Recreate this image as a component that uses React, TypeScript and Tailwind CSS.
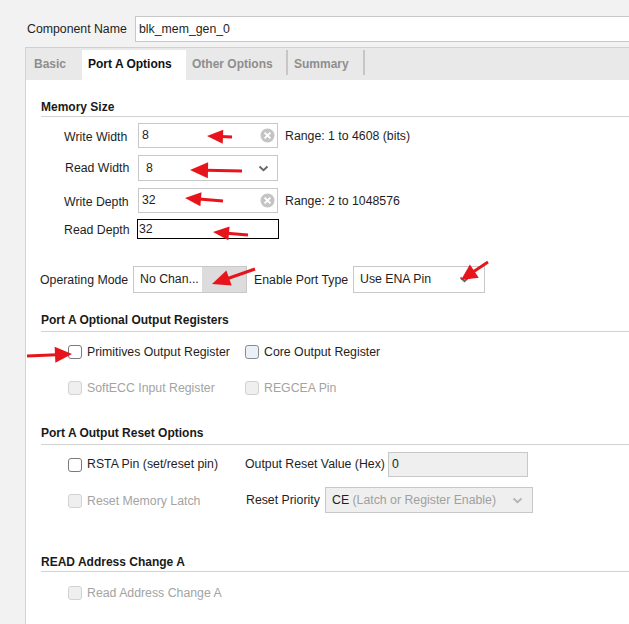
import React from 'react';

const RED = '#e8141c';

function Arrow({ x1, y1, x2, y2, head = 16, hw = 7, sw = 3 }: { x1: number; y1: number; x2: number; y2: number; head?: number; hw?: number; sw?: number }) {
  const dx = x2 - x1;
  const dy = y2 - y1;
  const len = Math.hypot(dx, dy);
  const ux = dx / len;
  const uy = dy / len;
  const px = -uy;
  const py = ux;
  const bx = x2 - ux * head;
  const by = y2 - uy * head;
  const pts = `${x2},${y2} ${bx + px * hw},${by + py * hw} ${bx - px * hw},${by - py * hw}`;
  return (
    <g>
      <line x1={x1} y1={y1} x2={bx + ux * 2} y2={by + uy * 2} stroke={RED} strokeWidth={sw} />
      <polygon points={pts} fill={RED} />
    </g>
  );
}

function Chevron({ color = '#666' }: { color?: string }) {
  return (
    <svg width="11" height="7" viewBox="0 0 11 7">
      <path d="M1.5 1.5 L5.5 5.2 L9.5 1.5" fill="none" stroke={color} strokeWidth="1.8" />
    </svg>
  );
}

function ClearIcon() {
  return (
    <svg width="15" height="15" viewBox="0 0 15 15">
      <circle cx="7.5" cy="7.5" r="7" fill="#c4c4c4" />
      <path d="M4.6 4.6 L10.4 10.4 M10.4 4.6 L4.6 10.4" stroke="#fff" strokeWidth="1.9" />
    </svg>
  );
}

function Check({ disabled = false, tint = false }: { disabled?: boolean; tint?: boolean }) {
  if (disabled) return <span className="w-[14px] h-[14px] rounded-[3px] border border-[#d2d2d2] bg-[#efefef] shrink-0" />;
  if (tint) return <span className="w-[14px] h-[14px] rounded-[3px] border border-[#8c8c8c] bg-[#eaf0f8] shrink-0" />;
  return <span className="w-[14px] h-[14px] rounded-[3px] border border-[#7a7a7a] bg-white shrink-0" />;
}

function Header({ children, cls }: { children: React.ReactNode; cls: string }) {
  return <div className={`font-bold text-[12px] leading-[14px] border-b border-[#d3d3d3] text-[#1a1a1a] ${cls}`}>{children}</div>;
}

export default function App() {
  return (
    <div className="relative w-[629px] h-[624px] overflow-hidden bg-[#f2f2f2] font-['Liberation_Sans',Arial,sans-serif] text-[12.3px] text-[#1e1e1e]">
      <div className="flex items-center pt-[16px] pl-[27px] h-[42px]">
        <span className="w-[108px]">Component Name</span>
        <div className="h-[26px] flex-1 -mr-[10px] bg-white border border-[#c8c8c8] flex items-center pl-[3px]">blk_mem_gen_0</div>
      </div>

      <div className="ml-[25px] mt-[5px] flex flex-col h-[577px] border-l border-[#d4d4d4]">
        <div className="h-[33px] bg-[#e9e9e9] border-t border-[#d0d0d0] flex items-end font-bold text-[12px]">
          <div className="w-[56px] h-[30px] flex items-center pl-[8px] pb-[3px] text-[#8e8e8e]">Basic</div>
          <div className="w-[104px] h-[30px] flex items-center pl-[6px] pb-[3px] bg-white text-[#111]">Port A Options</div>
          <div className="w-[100px] h-[30px] flex items-center pl-[6px] pb-[3px] text-[#8e8e8e]">Other Options</div>
          <div className="w-[2px] h-[25px] self-start mt-[2px] bg-[#c6c6c6]" />
          <div className="w-[75px] h-[30px] flex items-center pl-[6px] pb-[3px] text-[#8e8e8e]">Summary</div>
          <div className="w-[2px] h-[25px] self-start mt-[2px] bg-[#c6c6c6]" />
        </div>

        <div className="flex-1 bg-white pl-[15px] flex flex-col">
          <Header cls="mt-[20px] pb-[2px]">Memory Size</Header>

          <div className="ml-[23px] mt-[6px] flex flex-col">
            <div className="flex items-center h-[25px]">
              <span className="w-[74px] pt-[3px]">Write Width</span>
              <div className="w-[140px] h-[25px] border border-[#c8c8c8] flex items-center justify-between pl-[3px] pr-[2px]">
                <span>8</span>
                <ClearIcon />
              </div>
              <span className="ml-[7px] pt-[2px]">Range: 1 to 4608 (bits)</span>
            </div>
            <div className="flex items-center h-[26px] mt-[7px]">
              <span className="w-[74px] pl-[1px]">Read Width</span>
              <div className="w-[140px] h-[26px] border border-[#c8c8c8] flex items-center justify-between pl-[7px] pr-[8px]">
                <span>8</span>
                <Chevron />
              </div>
            </div>
            <div className="flex items-center h-[25px] mt-[7px]">
              <span className="w-[74px] pt-[3px]">Write Depth</span>
              <div className="w-[140px] h-[25px] border border-[#c8c8c8] flex items-center justify-between pl-[3px] pr-[2px]">
                <span>32</span>
                <ClearIcon />
              </div>
              <span className="ml-[7px] pt-[2px]">Range: 2 to 1048576</span>
            </div>
            <div className="flex items-center h-[20px] mt-[6px]">
              <span className="w-[73px] pt-[2px]">Read Depth</span>
              <div className="w-[142px] h-[20px] border border-black flex items-center pl-[1px]">32</div>
            </div>
          </div>

          <div className="flex items-center h-[27px] mt-[27px] -ml-[1px]">
            <span className="w-[93px] pt-[2px]">Operating Mode</span>
            <div className="w-[114px] h-[27px] border border-[#c8c8c8] flex">
              <div className="flex-1 flex items-center pl-[6px]">No Chan...</div>
              <div className="w-[44px] bg-[#dcdcdc] flex items-center justify-center">
                <Chevron />
              </div>
            </div>
            <span className="ml-[7px] w-[99px] pt-[2px]">Enable Port Type</span>
            <div className="w-[132px] h-[27px] border border-[#c8c8c8] flex items-center justify-between pl-[6px] pr-[14px]">
              <span>Use ENA Pin</span>
              <Chevron />
            </div>
          </div>

          <Header cls="mt-[20px] pb-[4px]">Port A Optional Output Registers</Header>

          <div className="ml-[27px] mt-[10px] grid grid-cols-[177px_1fr] gap-y-[16px]">
            <div className="flex items-center h-[20px] gap-[5px]"><Check /><span>Primitives Output Register</span></div>
            <div className="flex items-center h-[20px] gap-[5px]"><Check tint /><span>Core Output Register</span></div>
            <div className="flex items-center h-[20px] gap-[5px] text-[#a3a3a3]"><Check disabled /><span>SoftECC Input Register</span></div>
            <div className="flex items-center h-[20px] gap-[5px] text-[#a3a3a3]"><Check disabled /><span>REGCEA Pin</span></div>
          </div>

          <Header cls="mt-[28px] pb-[4px]">Port A Output Reset Options</Header>

          <div className="ml-[27px] mt-[7px] flex flex-col">
            <div className="flex items-center h-[25px]">
              <div className="w-[177px] flex items-center gap-[5px]"><Check /><span>RSTA Pin (set/reset pin)</span></div>
              <span className="w-[143px]">Output Reset Value (Hex)</span>
              <div className="w-[140px] h-[25px] border border-[#c8c8c8] bg-[#efefef] flex items-center pl-[3px]">0</div>
            </div>
            <div className="flex items-center h-[26px] mt-[10px]">
              <div className="w-[178px] flex items-center gap-[5px] text-[#a3a3a3] pt-[2px]"><Check disabled /><span>Reset Memory Latch</span></div>
              <span className="w-[79px]">Reset Priority</span>
              <div className="w-[208px] h-[26px] border border-[#c8c8c8] bg-[#efefef] flex items-center justify-between pl-[6px] pr-[9px]">
                <span>CE <span className="text-[#a0a0a0]">(Latch or Register Enable)</span></span>
                <Chevron color="#b4b4b4" />
              </div>
            </div>
          </div>

          <Header cls="mt-[42px] pb-[2px]">READ Address Change A</Header>

          <div className="ml-[27px] mt-[11px] flex items-center h-[20px] gap-[5px] text-[#a3a3a3]"><Check disabled /><span>Read Address Change A</span></div>
        </div>
      </div>

      <svg className="absolute inset-0 pointer-events-none" width="629" height="624">
        <Arrow x1={232} y1={137} x2={207} y2={136} head={16} hw={7} />
        <Arrow x1={242} y1={171} x2={190} y2={170} head={18} hw={8} />
        <Arrow x1={223} y1={201} x2={185} y2={198} head={16} hw={7} />
        <Arrow x1={248} y1={235} x2={213} y2={232} head={16} hw={7} />
        <Arrow x1={255} y1={269} x2={212} y2={284} head={18} hw={8} />
        <Arrow x1={488} y1={262} x2={461} y2={280} head={16} hw={8} />
        <Arrow x1={27} y1={356} x2={72} y2={354} head={17} hw={8} />
      </svg>
    </div>
  );
}
